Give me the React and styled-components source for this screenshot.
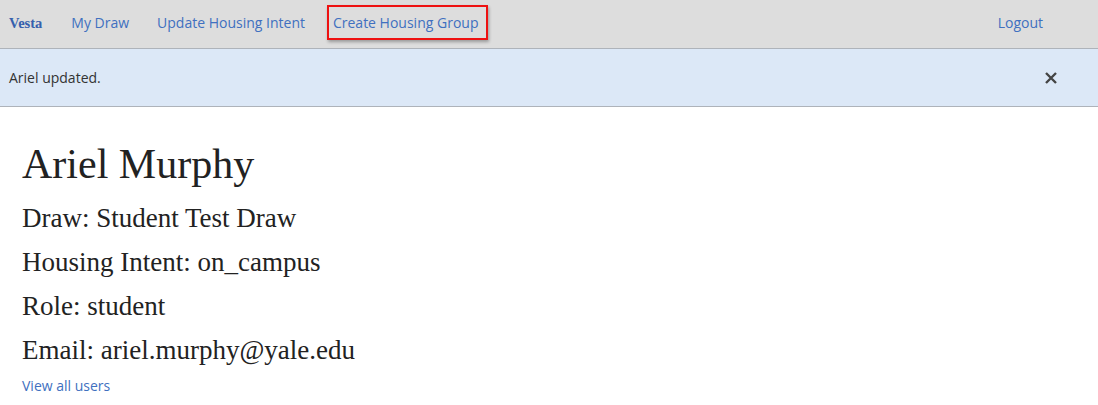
import styled, { createGlobalStyle } from 'styled-components'

const GlobalStyle = createGlobalStyle`
    body {
        margin: 0;
        background: #fff;
        font-family: "Open Sans", "Liberation Sans", sans-serif;
        color: #222;
    }
`

const NavBar = styled.nav`
    display: flex;
    align-items: center;
    height: 44px;
    padding: 0 41px 4px 9px;
    background: #dddddd;
    border-bottom: 1px solid #aeb3ba;
`
const Brand = styled.a`
    font-family: "Liberation Serif", serif;
    font-weight: bold;
    font-size: 14.5px;
    color: #3560ad;
    text-decoration: none;
    margin-right: 15px;
    padding-top: 2px;
`
const NavLink = styled.a`
    display: inline-flex;
    align-items: center;
    font-size: 14px;
    line-height: 19px;
    color: #4070c0;
    text-decoration: none;
    padding: 0 14px;
    margin-left: ${props => (props.$right ? 'auto' : '0')};
`
// the red outline marked on the screenshot
const Highlight = styled.span`
    padding: 6px 8px 6px 4px;
    margin: 0 -10px 0 -6px;
    border: 2px solid #ee1111;
    box-shadow: 1px 2px 3px rgba(0, 0, 0, .3);
`

const Flash = styled.div`
    display: flex;
    align-items: center;
    justify-content: space-between;
    height: 57px;
    padding: 0 40px 0 9px;
    background: #dce8f7;
    border-bottom: 1px solid #aeb3ba;
    font-size: 14px;
    color: #333;
`
const CloseButton = styled.button`
    border: 0;
    background: none;
    padding: 0;
    width: 14px;
    height: 14px;
    cursor: pointer;
    display: flex;
`

const Main = styled.main`
    padding: 33px 22px 0;
    font-family: "Liberation Serif", "Times New Roman", serif;
`
const Name = styled.h1`
    margin: 0 0 8px;
    font-size: 42px;
    font-weight: normal;
    line-height: 48px;
`
const InfoLine = styled.div`
    font-size: 27px;
    line-height: 44px;
`
const SmallLink = styled.a`
    display: block;
    margin-top: 4px;
    font-family: "Open Sans", "Liberation Sans", sans-serif;
    font-size: 14px;
    line-height: 19px;
    color: #4070c0;
    text-decoration: none;
`

const App = () => {
    return (
        <>
            <GlobalStyle />
            <NavBar>
                <Brand href="#">Vesta</Brand>
                <NavLink href="#">My Draw</NavLink>
                <NavLink href="#">Update Housing Intent</NavLink>
                <NavLink href="#"><Highlight>Create Housing Group</Highlight></NavLink>
                <NavLink href="#" $right>Logout</NavLink>
            </NavBar>
            <Flash>
                <span>Ariel updated.</span>
                <CloseButton aria-label="close">
                    <svg width="14" height="14" viewBox="0 0 14 14">
                        <path d="M2 2 L12 12 M12 2 L2 12" stroke="#444" strokeWidth="2.4" />
                    </svg>
                </CloseButton>
            </Flash>
            <Main>
                <Name>Ariel Murphy</Name>
                <InfoLine>Draw: Student Test Draw</InfoLine>
                <InfoLine>Housing Intent: on_campus</InfoLine>
                <InfoLine>Role: student</InfoLine>
                <InfoLine>Email: ariel.murphy@yale.edu</InfoLine>
                <SmallLink href="#">View all users</SmallLink>
            </Main>
        </>
    )
}
export default App
